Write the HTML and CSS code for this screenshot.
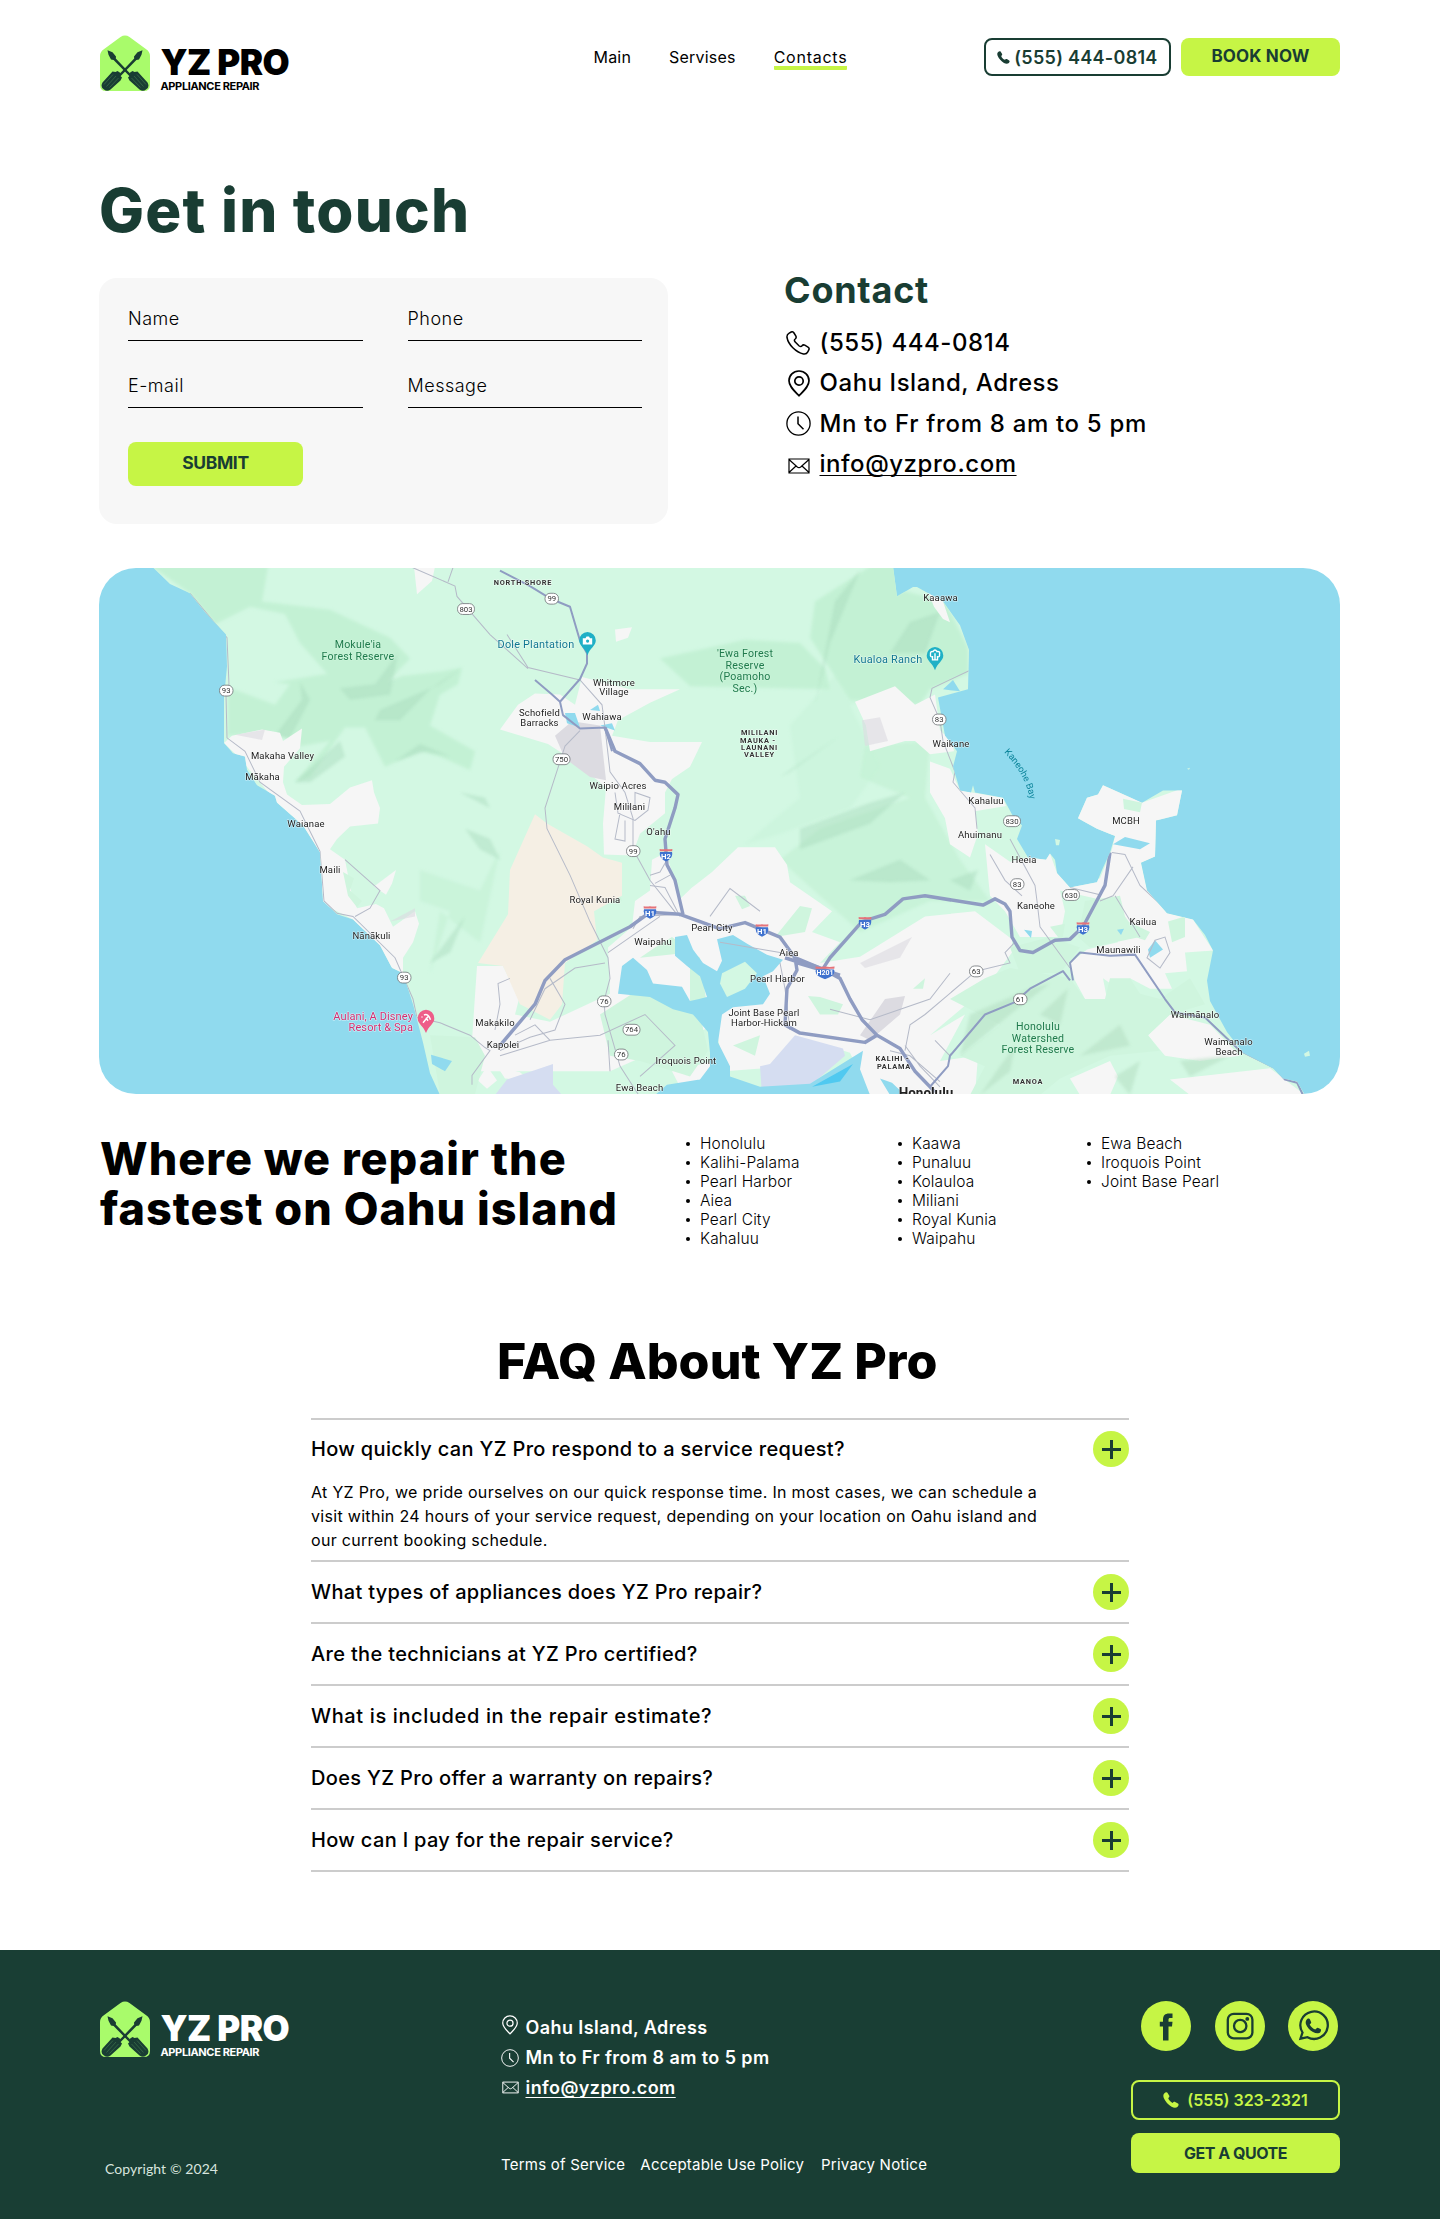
FILE: index.html
```html
<!DOCTYPE html>
<html lang="en">
<head>
<meta charset="utf-8">
<title>YZ Pro – Contacts</title>
<link rel="stylesheet" href="styles.css">
</head>
<body>
<svg class="defs" width="0" height="0" aria-hidden="true">
  <symbol id="mark" viewBox="0 0 50 56">
    <path d="M20.500 1.900Q25 -1 29.500 1.900L46.500 14.500Q50 17 50 21V50Q50 56 44 56H6Q0 56 0 50V21Q0 17 3.500 14.500Z" fill="#a9fb6b"/>
    <g id="driver">
      <path d="M7.500 15.200L12.500 17.300L16 21.500L15.800 23.500L32 40.500L30.300 42L13.600 25L11 24.500L8.500 19.800Z" fill="#193d33"/>
      <path d="M28 42.500L30.500 40L29.500 38L32.500 36L34.500 37L37.500 36.500L47.500 47.500Q50 52 46 54.500Q43 57 39.500 54.500L29.500 45.500Z" fill="#193d33"/>
      <path d="M34 41L43.500 51.500M37 39.500L46 49.500M31.500 43L40.500 52.500" stroke="#4f8a57" stroke-width=".5"/>
    </g>
    <use href="#driver" transform="matrix(-1 0 0 1 50 0)"/>
  </symbol>
  <symbol id="handset" viewBox="0 0 16 16">
    <path d="M1.200 1.500C2.300.2 4 0 4.600.9L6.300 3.800C6.700 4.600 6 5.400 5.200 6.100C5.700 8 7.500 10 9.700 10.900C10.300 10.200 11.200 9.400 12.100 9.900L15 11.600C16 12.400 15.600 13.700 14.600 14.700C13.200 16 11 16.100 8.600 14.700C5.200 12.700 2.200 9.200.9 6.200C.1 4.300.1 2.700 1.200 1.500Z" fill="currentColor"/>
  </symbol>
  <symbol id="phone" viewBox="0 0 24 24">
    <path d="M3.200 2.100L5.200 1C6.300.5 7.400 1 8 2L9.900 5.200C10.500 6.400 10.100 7.300 9.200 8C8 8.800 8.200 9.600 9 10.800L13.200 15C14.400 15.800 15.200 16 16 14.800C16.700 13.900 17.700 13.600 18.800 14.200L22 16.100C23 16.700 23.400 17.800 22.800 18.900L21.800 20.800C21 22.400 19.500 23.200 17.500 22.900C9.800 21.200 2.300 13.600 1 6.500C.7 4.500 1.500 3 3.200 2.100Z" fill="none" stroke="currentColor" stroke-width="1.500"/>
  </symbol>
  <symbol id="pin" viewBox="0 0 22 27">
    <path d="M11 1C5.300 1 1 5.200 1 10.700C1 16.200 6 20.500 11 25.700C16 20.500 21 16.200 21 10.700C21 5.200 16.700 1 11 1Z" fill="none" stroke="currentColor" stroke-width="1.700"/>
    <circle cx="11" cy="11" r="4.200" fill="none" stroke="currentColor" stroke-width="1.700"/>
  </symbol>
  <symbol id="clock" viewBox="0 0 25 25">
    <circle cx="12.500" cy="12.500" r="11.600" fill="none" stroke="currentColor" stroke-width="1.300"/>
    <path d="M12 5.500V12.800L17.500 18.300" fill="none" stroke="currentColor" stroke-width="1.500"/>
  </symbol>
  <symbol id="mail" viewBox="0 0 22 16">
    <path d="M1 1H21V15H1ZM1 1.500L9.300 9Q11 10.300 12.700 9L21 1.500M1 14.500L8 8M21 14.500L14 8" fill="none" stroke="currentColor" stroke-width="1.200"/>
  </symbol>
  <symbol id="shield" viewBox="0 0 14 13">
    <path d="M1 3.500H13Q14.500 9.500 7 12.800Q-.5 9.500 1 3.500Z" fill="#3f72cf"/>
    <path d="M.6.600Q3.800 1.200 7 .6Q10.200 1.200 13.400.6L13.200 2.800H.8Z" fill="#e5737a"/>
  </symbol>
</svg>

<header class="header">
  <a class="brand">
    <svg class="brand-mark"><use href="#mark"/></svg>
    <span class="brand-text"><b class="brand-name">YZ PRO</b><b class="brand-sub">APPLIANCE REPAIR</b></span>
  </a>
  <nav class="nav"><a>Main</a><a>Servises</a><a class="active">Contacts</a></nav>
  <div class="header-actions">
    <a class="btn btn-outline"><svg class="ic-btn"><use href="#handset"/></svg>(555) 444-0814</a>
    <a class="btn btn-solid btn-book">BOOK NOW</a>
  </div>
</header>

<main class="main">
  <h1 class="title">Get in touch</h1>
  <section class="touch">
    <form class="form">
      <input class="field" placeholder="Name">
      <input class="field" placeholder="Phone">
      <input class="field" placeholder="E-mail">
      <input class="field" placeholder="Message">
      <button class="submit" type="button">SUBMIT</button>
    </form>
    <div class="contact">
      <h2>Contact</h2>
      <ul>
        <li><svg class="i-phone"><use href="#phone"/></svg><span>(555) 444-0814</span></li>
        <li><svg class="i-pin"><use href="#pin"/></svg><span>Oahu Island, Adress</span></li>
        <li><svg class="i-clock"><use href="#clock"/></svg><span class="hours">Mn to Fr from 8 am to 5 pm</span></li>
        <li><svg class="i-mail"><use href="#mail"/></svg><span class="link">info@yzpro.com</span></li>
      </ul>
    </div>
  </section>

  <svg class="map" viewBox="99 567.500 1241 509.500" preserveAspectRatio="none">
    <defs><filter id="soft" x="-10%" y="-10%" width="120%" height="120%"><feGaussianBlur stdDeviation="1.600"/></filter>
    <clipPath id="landclip"><use href="#landshape"/></clipPath></defs>
    <rect x="99" y="567" width="1242" height="511" fill="#90daee"/>
    <path id="landshape" fill="#d3f8e3" d="M152 566L170 583L190 592L205 610L226 632L227 663L224 693L224 737L233 747L245 750L247 763L257 778L275 788L277 795L303 817L320 843L323 890L337 903L353 908L380 933L392 955L403 960L413 990L423 1027L430 1057L440 1078H1305L1297 1065L1283 1062L1273 1052L1243 1037L1227 1017L1210 987L1207 967L1213 938L1205 923L1193 908L1167 902L1147 880L1141 853L1155 847L1156 812L1177 807L1182 783L1163 783L1142 795L1103 778L1098 787L1087 790L1078 810L1097 820L1115 827L1110 843L1102 860L1097 872L1070 877L1057 863L1055 850L1050 844L1046 850L1028 848L1017 830L1022 817L1013 808L1003 790L975 785L973 778L971 785L960 783L953 760L957 745L945 730L938 693L968 685L969 647L960 623L943 600L917 586L913 586L897 595L893 566Z"/>
    <g clip-path="url(#landclip)">
      <g fill="#c3f1d4" filter="url(#soft)">
        <path d="M152 566L268 566L262 600L330 608L390 635L410 655L385 680L340 684L300 640L285 612L250 605L215 622L190 592Z"/>
        <path d="M228 683L275 700L290 680L275 678L340 668L380 680L402 672L440 668L462 664L458 680L440 690L430 720L475 745L470 763L440 750L420 745L385 760L365 722L345 722L310 770L295 775L330 735L300 740L275 727L228 730Z"/>
        <path d="M660 655L745 637L800 640L825 665L830 685L690 682Z"/>
        <path d="M870 566L895 566L905 590L945 600L968 645L968 670L930 685L920 700L850 695L810 635L815 600Z"/>
        <path d="M790 720L855 650L840 610L875 640L890 690L850 700L880 760L850 800L780 825L745 835L800 790Z" opacity=".35"/>
        <path d="M865 740L930 735L925 790L960 850L990 890L930 890L860 920L780 850L820 820L910 790L860 770Z" opacity=".7"/>
        <path d="M420 860L480 880L500 840L480 930L440 900L430 960L450 900L420 890Z" opacity=".55"/>
      </g>
      <g fill="#a6d8ba" opacity=".42" filter="url(#soft)">
        <path d="M300 678L302 695L275 730L290 732L310 695ZM340 684L375 680L398 650L390 690L350 695ZM380 705L440 680L462 664L430 685L400 715L375 715ZM295 775L340 735L345 750L310 775ZM395 755L420 738L450 750L425 745ZM465 820L490 830L500 850L480 840ZM460 785L490 800L485 790ZM465 905L430 950L450 940ZM835 600L860 570L830 640L815 700ZM910 620L940 610L925 650L890 650ZM800 820L870 795L905 785L870 815L800 840ZM850 870L900 850L930 870L890 872ZM950 870L978 860L970 880ZM780 770L840 730L790 765Z"/>
      </g>
      <g fill="#f6f6f6">
        <path d="M224 737L232 730L262 724L280 727L283 735L302 723L300 742L284 760L283 775L287 787L302 797L330 796L350 780L372 773L374 785L380 800L378 815L350 818L337 830L330 840L345 850L352 885L357 897L376 893L384 897L393 915L415 900L419 912L413 930L403 945L403 960L392 955L353 908L323 893L320 843L303 817L277 795L240 752Z"/>
        <path d="M414 566L435 566L432 580L417 593ZM615 627L632 625L628 635L616 639Z"/>
        <path d="M500 724L518 700L535 689L560 690L575 700L582 673L630 685L680 685L650 698L618 715L612 730L650 736L702 736L690 760L672 772L665 785L665 805L640 825L632 846L604 845L603 815L606 780L575 755L548 738Z"/>
        <path d="M477 953L503 953L519 985L515 1000L550 1007L610 980L608 935L632 915L635 890L650 880L652 850L666 843L680 888L692 877L712 862L738 838L775 838L787 855L790 872L832 900L812 920L840 930L820 950L860 944L925 905L975 900L1012 927L1012 940L985 975L930 1020L965 1000L940 1045L978 1040L975 1078L870 1078L850 1037L800 1022L790 1050L725 1055L715 1010L610 1055L480 1055L472 1025Z"/>
        <path d="M855 697L895 682L915 700L935 690L940 725L952 735L954 745L930 748L915 735L905 735L870 745L866 720ZM930 755L950 762L960 783L1003 790L1006 798L975 803L978 825L970 848L950 835L945 810L930 785Z"/>
        <path d="M985 835L1010 852L1028 848L1050 844L1057 863L1070 877L1100 868L1112 840L1115 827L1070 815L1080 785L1103 775L1142 795L1185 780L1177 810L1156 812L1156 847L1141 853L1147 880L1167 902L1193 908L1213 938L1185 940L1187 958L1165 960L1172 975L1150 975L1130 965L1122 978L1103 965L1107 985L1085 985L1075 967L1070 950L1087 937L1118 930L1098 888L1060 880L1065 900L1060 925L1020 925L1005 900L990 885Z"/>
        <path d="M928 590L943 600L950 620L943 617L934 605ZM1148 1020L1170 1000L1210 1010L1240 1040L1200 1045L1165 1040ZM1170 1063L1270 1052L1305 1078H1190ZM1070 1062L1110 1045L1118 1060L1110 1078H1080Z"/>
        <path d="M497 1050L520 1056L530 1064L505 1062ZM672 1055L715 1045L705 1064L680 1070ZM487 1050L497 1064L487 1072L478 1064Z"/>
      </g>
      <g fill="#cff5de">
        <path d="M343 862L354 868L350 880L362 890L357 896L348 885ZM1123 791L1142 795L1140 804L1124 801ZM1010 935L1050 925L1080 935L1060 960L1020 960ZM1050 915L1065 912L1062 930ZM985 965L1010 955L1070 965L1085 985L1105 985L1110 965L1130 965L1140 980L1160 985L1190 965L1205 990L1170 1000L1148 1020L1160 1035L1110 1040L1060 1062L1040 1078L970 1078L985 1050L960 1040L1000 1010L950 985ZM1085 890L1120 885L1125 905L1140 925L1090 935L1078 925ZM1100 900L1128 910L1150 920L1145 928L1120 920ZM1168 910L1185 905L1185 925L1172 930Z"/>
        <path d="M775 925L800 895L812 897L805 920ZM808 982L820 983L843 990L838 1000L820 1000ZM690 1000L690 940L640 945L655 935L672 925L700 945L706 985ZM600 1000L640 975L700 1000L708 1035L690 1060L640 1045L610 1040ZM430 1020L475 1022L485 1040L475 1077L440 1077ZM913 975L925 965L923 975ZM733 1030L760 1020L755 1040ZM605 880L618 878L622 890ZM735 885L745 885L750 895L742 898Z"/>
      </g>
      <path d="M374 876L396 860L392 873L386 884Z" fill="#f6f6f6"/>
      <g fill="#b5dfc3" opacity=".55" filter="url(#soft)"><path d="M970 1000L1030 975L1050 970L1010 1000L960 1040ZM1040 1000L1068 975L1060 1010ZM980 1078L1000 1050L1015 1030L1010 1055ZM1080 1040L1120 1010L1130 1030ZM1115 1060L1140 1045L1130 1078ZM1180 1045L1230 1040L1190 1060Z"/></g>
      <path fill="#f5efe4" d="M535 806L547 815L587 837L603 848L622 853L622 885L594 900L597 928L565 950L562 990L550 1005L520 990L503 953L478 950L508 903L510 860Z"/>
      <g fill="#dcdbe1"><path d="M555 730L572 716L600 720L606 773L590 770L565 752ZM860 1020L885 985L905 982L900 1000L870 1025Z"/><path opacity=".6" d="M862 715L880 712L888 735L865 740ZM860 950L912 925L900 945L865 955ZM390 910L415 897L415 905ZM235 729L265 724L262 734Z"/></g>
      <path fill="#d5ddf1" d="M760 1050L770 1048L795 1020L843 1033L845 1040L815 1065L812 1078H762ZM495 1078L507 1063L553 1048L553 1068L562 1078Z"/>
      <g fill="#90daee">
        <path d="M675 925L687 923L693 937L703 950L717 958L722 948L717 927L733 923L748 932L767 942L783 947L773 958L763 963L770 980L763 990L733 993L722 1000L718 1027L730 1050L730 1060L760 1070L810 1067L863 1035L860 1053L870 1078H655L667 1068L700 1063L710 1050L710 1037L708 1017L693 1000L673 995L650 983L618 980L622 953L633 945L647 957L653 970L682 973L690 987L707 983L700 963L687 953L675 943Z"/>
        <path d="M943 685L953 676L960 687ZM565 708L575 708L580 722L567 718ZM590 705L598 700L600 706ZM600 720L612 718L615 725ZM431 1039L452 1045L445 1055L432 1048ZM1113 835L1125 828L1150 834L1140 840ZM1148 937L1155 928L1163 937L1150 945ZM1024 918L1032 919L1031 926ZM1117 918L1124 917L1121 923ZM880 1062L892 1066L905 1078H890Z"/>
      </g>
      <path fill="#d3f8e3" d="M720 970L722 960L745 949L757 960L745 975L727 983Z"/>
      <path fill="#50c9f0" d="M812 1070L853 1048L840 1065Z"/>
      <g class="minor">
        <path d="M190 592L227 635L229 680L226 690L227 732L245 745L260 775L300 803L320 842L324 890L337 902L353 905L395 945L413 985L417 1003L440 1008L470 1020L485 1032L490 1035L472 1059V1068"/>
        <path d="M410 566L455 585L457 595L490 632L528 665M448 581L453 567M507 632L528 664L580 676L602 700L605 722L610 765L625 785L633 810L633 840L650 870L677 903"/>
        <path d="M580 725L565 740L560 755L545 800L547 820L570 865L590 910L608 945L610 965L604 987L605 1000L620 1050L640 1080"/>
        <path d="M969 667L932 684L930 693L940 715L943 735L955 765L953 775L975 800L977 820M990 845L1005 870L1022 885M1010 830L1035 875L1037 890L1040 915L1070 955M1112 843L1125 845L1140 875L1170 902M1133 857L1113 885L1100 890M1070 877L1100 884M1115 885L1140 925"/>
        <path d="M633 917L640 905L675 903M608 940L660 905M650 865L660 862L667 850M655 873L670 865M650 875L665 877L680 905M500 1040L550 1025L600 1020L645 1000L675 1030L640 1060M610 1055L608 1025M550 1025L535 1010L515 1020M550 965L565 990L555 1015L530 1022L500 1035M605 950L575 955L545 975L530 1005M345 850L380 880L370 897L355 905M710 905L730 878L760 900M780 950L785 975L790 1015M1015 930L1005 940L1010 950L976 958L925 1000L910 1010L905 1035M830 995L870 1005L930 985L950 960M495 1015L500 990L498 970L510 965"/>
        <path d="M615 785L618 805L635 812L648 802L650 790L635 785L635 800M625 812L625 832L615 830L620 805M720 930L780 940L830 957M905 1030L920 1050L940 1070M890 1035L910 1040L940 1065M950 1040L935 1025M1155 928L1165 925L1170 940L1160 955L1147 945Z"/>
      </g>
      <g class="major">
        <path d="M535 676L552 690L560 697M1070 967L1063 958L1030 975L1015 988L985 1000L950 1040L948 1050L930 1070M1073 967L1070 950L1080 940L1110 943L1135 942L1165 985L1175 998L1205 1003L1240 1035L1275 1052L1285 1063L1297 1066L1303 1078"/>
        <path d="M500 570L530 585L550 597L570 605L580 638L587 650L587 660L580 675L560 697L563 710L580 723L605 722L612 745"/>
      </g>
      <g class="highway">
        <path d="M500 1030L535 990L545 967L565 947L630 915L650 901L680 903L720 917L745 911L780 925L795 945L825 957L840 965L850 985L862 1005L877 1020L900 1033L915 1055L935 1075M683 903L675 870L667 855L665 830L675 800L678 787L665 775L655 773L640 757L615 745L605 722"/>
        <path d="M822 957L830 945L862 910L885 903L903 888L925 885L983 894L995 888L1005 893L1010 900L1012 925L1020 938L1033 940L1055 928L1070 927L1083 915L1105 875L1110 843"/>
        <path d="M795 945L797 957L787 975L785 1010L800 1018L865 1027L877 1020M785 945L840 962M797 950L825 958"/>
      </g>
    </g>
    <path fill="#d3f8e3" d="M1055 830L1060 831L1059 836L1056 836ZM1187 762L1190 761L1189 763ZM1304 1038L1309 1035L1310 1040L1305 1041Z"/>

    <g class="route"><g><rect x="457.500" y="602" width="17" height="10.500" rx="5"/><rect x="545" y="592" width="13.500" height="10.500" rx="5"/><rect x="219.500" y="681" width="13.500" height="10.500" rx="5"/><rect x="397.500" y="959" width="13.500" height="10.500" rx="5"/><rect x="553" y="747.500" width="17" height="10.500" rx="5"/><rect x="626.500" y="836.500" width="13.500" height="10.500" rx="5"/><rect x="597.500" y="982" width="13.500" height="10.500" rx="5"/><rect x="623" y="1009.500" width="17" height="10.500" rx="5"/><rect x="614.500" y="1033.500" width="13.500" height="10.500" rx="5"/><rect x="932.500" y="709" width="13.500" height="10.500" rx="5"/><rect x="1003.500" y="807.500" width="17" height="10.500" rx="5"/><rect x="1010.500" y="868.500" width="13.500" height="10.500" rx="5"/><rect x="1062.500" y="879" width="17" height="10.500" rx="5"/><rect x="969.500" y="953" width="13.500" height="10.500" rx="5"/><rect x="1013.500" y="980" width="13.500" height="10.500" rx="5"/></g>
      <text x="466" y="609.700">803</text><text x="551.800" y="599.700">99</text><text x="226.200" y="688.700">93</text><text x="404.200" y="966.700">93</text><text x="561.500" y="755.200">750</text><text x="633.200" y="844.200">99</text><text x="604.200" y="989.700">76</text><text x="631.500" y="1017.200">764</text><text x="621.200" y="1041.200">76</text><text x="939.200" y="716.700">83</text><text x="1012" y="815.200">830</text><text x="1017.200" y="876.200">83</text><text x="1071" y="886.700">630</text><text x="976.200" y="960.700">63</text><text x="1020.200" y="987.700">61</text></g>
    <g class="inter"><use href="#shield" x="659" y="839" width="14" height="13"/><use href="#shield" x="643" y="894.500" width="14" height="13"/><use href="#shield" x="755" y="912" width="14" height="13"/><use href="#shield" x="858" y="905" width="14" height="13"/><use href="#shield" x="1076" y="910" width="14" height="13"/>
      <g transform="translate(814.500 953) scale(1.500 1)"><use href="#shield" width="14" height="13"/></g>
      <text x="666" y="849">H2</text><text x="650" y="904.500">H1</text><text x="762" y="922">H1</text><text x="865" y="915">H3</text><text x="1083" y="920">H3</text><text class="wide" x="825" y="962">H201</text></g>

    <g class="poi">
      <path class="drop-teal" d="M587.500 629.500A8.300 8.300 0 0 1 595.800 637.800C595.800 643 590 645 587.500 652C585 645 579.200 643 579.200 637.800A8.300 8.300 0 0 1 587.500 629.500Z"/>
      <path class="drop-teal" d="M935 644A8.300 8.300 0 0 1 943.300 652.300C943.300 657.500 937.500 659.500 935 666.500C932.500 659.500 926.700 657.500 926.700 652.300A8.300 8.300 0 0 1 935 644Z"/>
      <path class="drop-pink" d="M426 995.500A8.300 8.300 0 0 1 434.300 1003.800C434.300 1009 428.500 1011 426 1018C423.500 1011 417.700 1009 417.700 1003.800A8.300 8.300 0 0 1 426 995.500Z"/>
      <path d="M582.800 635.500H585.500L586.500 633.800H589L590 635.500H592.200V641.500H582.800Z" fill="#fff"/><circle cx="587.600" cy="638.300" r="1.600" fill="#1fb0c6"/>
      <path d="M930.500 651Q930 648 933 648.500Q935 645.500 937 648.500Q940.500 648 939.500 651Q940 654 937.500 653.500V656.500H932.500V653.500Q930 654 930.500 651ZM935 650V656" fill="none" stroke="#fff" stroke-width="1.400"/>
      <path d="M423 1008L429 1001M424 1000.500Q428 998.500 430.500 1005M421.500 1002.500H422.500M426 1003L428 1006" fill="none" stroke="#fff" stroke-width="1.500"/>
    </g>

    <g class="lbl green"><text x="358" y="645">Mokule'ia</text><text x="358" y="656.300">Forest Reserve</text><text x="745" y="654">'Ewa Forest</text><text x="745" y="665.200">Reserve</text><text x="745" y="676.300">(Poamoho</text><text x="745" y="687.500">Sec.)</text><text x="1038" y="1015.500">Honolulu</text><text x="1038" y="1026.500">Watershed</text><text x="1038" y="1037.500">Forest Reserve</text></g>
    <g class="lbl teal"><text x="536" y="645">Dole Plantation</text><text x="888" y="660">Kualoa Ranch</text></g>
    <g class="lbl pink"><text x="413" y="1005.500">Aulani, A Disney</text><text x="413" y="1016">Resort &amp; Spa</text></g>
    <g class="lbl town"><text x="940.500" y="599.500">Kaaawa</text><text x="614" y="681.500">Whitmore</text><text x="614" y="690.500">Village</text><text x="539.500" y="711">Schofield</text><text x="539.500" y="720.500">Barracks</text><text x="602" y="714.500">Wahiawa</text><text x="951" y="741">Waikane</text><text x="618" y="782">Waipio Acres</text><text x="629.500" y="802">Mililani</text><text x="658.500" y="826.500">O'ahu</text><text x="282.500" y="753">Makaha Valley</text><text x="262.500" y="772.500">Mākaha</text><text x="306" y="818.500">Waianae</text><text x="330" y="862.500">Maili</text><text x="371.500" y="927">Nānākuli</text><text x="495" y="1011.500">Makakilo</text><text x="503" y="1032">Kapolei</text><text x="595" y="892">Royal Kunia</text><text x="653" y="933">Waipahu</text><text x="712" y="919.500">Pearl City</text><text x="789" y="943.500">Aiea</text><text x="777.500" y="969">Pearl Harbor</text><text x="764" y="1001.500">Joint Base Pearl</text><text x="764" y="1011">Harbor-Hickam</text><text x="686" y="1048">Iroquois Point</text><text x="639.500" y="1074.500">Ewa Beach</text><text x="986" y="796.500">Kahaluu</text><text x="980" y="829.500">Ahuimanu</text><text x="1024" y="853.500">Heeia</text><text x="1036" y="897.500">Kaneohe</text><text x="1143" y="913.500">Kailua</text><text x="1118.500" y="940.500">Maunawili</text><text x="1126" y="815.500">MCBH</text><text x="1195" y="1003">Waimānalo</text><text x="1228.500" y="1030">Waimanalo</text><text x="1229" y="1039.300">Beach</text></g>
    <g class="lbl area"><text x="523" y="584">NORTH SHORE</text><text x="759.500" y="729.500">MILILANI</text><text x="758" y="736.600">MAUKA -</text><text x="759.500" y="743.700">LAUNANI</text><text x="759.500" y="751">VALLEY</text><text x="892.500" y="1045.500">KALIHI -</text><text x="894" y="1052.500">PALAMA</text><text x="1028" y="1067.500">MANOA</text></g>
    <text class="lbl city" x="926" y="1081">Honolulu</text>
    <path id="bay" d="M1004 746Q1026 768 1030 792" fill="none"/>
    <text class="lbl bay"><textPath href="#bay">Kaneohe Bay</textPath></text>
  </svg>

  <section class="areas">
    <h2>Where we repair the<br>fastest on Oahu island</h2>
    <ul><li>Honolulu</li><li>Kalihi-Palama</li><li>Pearl Harbor</li><li>Aiea</li><li>Pearl City</li><li>Kahaluu</li></ul>
    <ul><li>Kaawa</li><li>Punaluu</li><li>Kolauloa</li><li>Miliani</li><li>Royal Kunia</li><li>Waipahu</li></ul>
    <ul><li>Ewa Beach</li><li>Iroquois Point</li><li>Joint Base Pearl</li></ul>
  </section>

  <section class="faq">
    <h2>FAQ About YZ Pro</h2>
    <div class="item open">
      <div class="question"><span>How quickly can YZ Pro respond to a service request?</span><i class="plus"></i></div>
      <p>At YZ Pro, we pride ourselves on our quick response time. In most cases, we can schedule a<br>visit within 24 hours of your service request, depending on your location on Oahu island and<br>our current booking schedule.</p>
    </div>
    <div class="item"><div class="question"><span>What types of appliances does YZ Pro repair?</span><i class="plus"></i></div></div>
    <div class="item"><div class="question"><span>Are the technicians at YZ Pro certified?</span><i class="plus"></i></div></div>
    <div class="item"><div class="question"><span class="loose">What is included in the repair estimate?</span><i class="plus"></i></div></div>
    <div class="item"><div class="question"><span>Does YZ Pro offer a warranty on repairs?</span><i class="plus"></i></div></div>
    <div class="item"><div class="question"><span>How can I pay for the repair service?</span><i class="plus"></i></div></div>
  </section>
</main>

<footer class="footer">
  <div class="f-left">
    <a class="brand">
      <svg class="brand-mark"><use href="#mark"/></svg>
      <span class="brand-text"><b class="brand-name">YZ PRO</b><b class="brand-sub">APPLIANCE REPAIR</b></span>
    </a>
    <span class="copy">Copyright © 2024</span>
  </div>
  <div class="f-mid">
    <ul class="f-contact">
      <li><svg class="f-pin"><use href="#pin"/></svg><span>Oahu Island, Adress</span></li>
      <li><svg class="f-clock"><use href="#clock"/></svg><span>Mn to Fr from 8 am to 5 pm</span></li>
      <li><svg class="f-mail"><use href="#mail"/></svg><span class="link">info@yzpro.com</span></li>
    </ul>
    <nav class="legal"><a>Terms of Service</a><a>Acceptable Use Policy</a><a>Privacy Notice</a></nav>
  </div>
  <div class="f-right">
    <div class="social">
      <svg viewBox="0 0 50 50"><circle cx="25" cy="25" r="25"/><path d="M22 39.500V25.500H18.800V20.800H22V18.500C22 14.500 24 12.500 28 12.500H31.500V17H29.300C28 17 27.500 17.500 27.500 18.800V20.800H31.500L31 25.500H27.500V39.500Z" fill="#193d33"/></svg>
      <svg viewBox="0 0 50 50"><circle cx="25" cy="25" r="25"/><g fill="none" stroke="#193d33" stroke-width="2.300"><rect x="12.800" y="12.800" width="24.600" height="24.600" rx="6"/><circle cx="25.200" cy="25" r="6.200"/></g><circle cx="32.300" cy="17.900" r="1.900" fill="#193d33"/></svg>
      <svg viewBox="0 0 50 50"><circle cx="25" cy="25" r="25"/><path d="M12.500 37.700L14.500 31.500A13.700 13.700 0 1 1 19.500 36.200Z" fill="none" stroke="#193d33" stroke-width="2.300"/><path d="M19.500 17.800C20.500 17.500 21.500 17.400 22 18.500L23.200 21.200C23.300 22.200 22.300 22.800 21.700 23.600C23 26 24.800 27.600 27.200 28.600C28.200 28.200 28.700 26.700 29.700 26.800L32.500 28.100C33.300 28.600 33.100 30 32.500 30.900C31 32.900 28 32.700 25 31.100C21.500 29.300 19 26.200 17.900 23C17.300 20.900 18 18.700 19.500 17.800Z" fill="#193d33"/></svg>
    </div>
    <a class="btn f-phone"><svg class="ic-btn"><use href="#handset"/></svg>(555) 323-2321</a>
    <a class="btn btn-solid f-quote">GET A QUOTE</a>
  </div>
</footer>
</body>
</html>
```
FILE: styles.css
```css
* { box-sizing: border-box; margin: 0; padding: 0; }
body { width: 1440px; background: #fff; color: #000; font-family: Inter, "Open Sans", sans-serif; }
ul { list-style: none; }
svg { display: block; flex: none; }
.defs { position: absolute; }
.link { text-decoration: underline; text-decoration-thickness: 1px; text-underline-offset: 3px; text-decoration-skip-ink: none; }

/* header */
.header { display: grid; grid-template-columns: 493.5px 390.5px 356px; padding: 35px 100px 0; height: 91px; }
.brand { display: flex; gap: 10.5px; height: 56px; }
.footer .brand { padding-left: 1px; }
.brand-mark { width: 50px; height: 56px; }
.brand-text { display: flex; flex-direction: column; gap: 5.5px; padding-top: 13.5px; white-space: nowrap; }
.brand-name { font-size: 35px; font-weight: 900; line-height: 26px; letter-spacing: -.55px; }
.brand-sub { font-size: 11px; font-weight: 700; line-height: 12px; letter-spacing: -.36px; }
.nav { display: flex; align-items: flex-start; gap: 38px; padding-top: 13px; font-size: 16px; line-height: 18px; }
.nav a { letter-spacing: .2px; }
.nav .active { letter-spacing: .75px; border-bottom: 4px solid #c6f545; border-radius: 1px; }
.header-actions { display: flex; gap: 10px; margin-top: 3px; }
.btn { display: flex; align-items: center; justify-content: center; border-radius: 8px; white-space: nowrap; }
.btn-outline { width: 187px; height: 38px; border: 2px solid #193d33; color: #193d33; font-size: 18px; font-weight: 600; letter-spacing: .29px; gap: 4px; }
.btn-outline .ic-btn { width: 13px; height: 13px; }
.btn-solid { background: #c6f545; color: #193d33; font-weight: 700; }
.btn-book { width: 159px; height: 38px; padding-bottom: 2px; font-size: 17px; letter-spacing: .15px; }

/* contact form */
.main { padding: 89px 100px 0 99px; }
.title { color: #193d33; font-size: 60px; font-weight: 800; line-height: 60px; letter-spacing: 1.2px; }
.touch { display: grid; grid-template-columns: 569px 1fr; gap: 116px; margin-top: 38px; }
.form { display: grid; grid-template-columns: 234.5px 234.5px; gap: 29px 45px; align-content: start; height: 246px; padding: 25px 29px; background: #f7f7f7; border-radius: 18px; }
.field { height: 38px; padding: 0 0 6px; border: 0; border-bottom: 1px solid #000; background: none; font: 300 18px/30px Inter, sans-serif; letter-spacing: .5px; }
.field::placeholder { color: #000; opacity: 1; }
.submit { width: 175px; height: 44px; margin-top: 5px; padding-bottom: 3px; border: 0; border-radius: 8px; background: #c6f545; color: #193d33; font: 700 17.500px Inter, sans-serif; letter-spacing: -.4px; }
.contact { margin-top: -8px; }
.contact h2 { color: #193d33; font-size: 36px; line-height: 40px; letter-spacing: .75px; }
.contact ul { margin-top: 13px; }
.contact li { display: grid; grid-template-columns: 35.5px auto; align-items: center; justify-content: start; height: 40.3px; font-size: 24px; line-height: 40px; font-weight: 500; letter-spacing: .55px; }
.contact .hours { letter-spacing: .67px; }
.i-phone { width: 24px; height: 24px; margin-left: 2px; }
.i-pin { width: 22px; height: 27px; margin-left: 4px; }
.i-clock { width: 25px; height: 25px; margin-left: 2px; }
.i-mail { width: 22px; height: 16px; margin-left: 4px; margin-top: 3px; }

/* map */
.map { width: 1241px; height: 526px; margin-top: 44px; border-radius: 37px; overflow: hidden; }
.minor { fill: none; stroke: #b5bac8; stroke-width: 1; }
.major { fill: none; stroke: #8f9cc2; stroke-width: 2; stroke-linejoin: round; }
.highway { fill: none; stroke: #8f9cc2; stroke-width: 3.4; stroke-linejoin: round; }
.drop-teal { fill: #1fb0c6; }
.drop-pink { fill: #ee5d88; }
.map text { font-family: Roboto, sans-serif; text-anchor: middle; }
.route rect { fill: #fff; stroke: #6f7478; stroke-width: .8; }
.route text { font-size: 7.800px; fill: #333; }
.inter text { font-size: 7.800px; font-weight: 700; fill: #fff; }
.inter .wide { font-size: 7px; }
.lbl { paint-order: stroke; stroke: rgba(255,255,255,.6); stroke-width: 1.2px; stroke-linejoin: round; }
.green { font-size: 10.600px; letter-spacing: .2px; fill: #1f7a4c; stroke: rgba(220,250,230,.4); }
.teal { font-size: 10.900px; letter-spacing: .2px; fill: #0f7690; }
.pink { font-size: 11px; letter-spacing: .12px; fill: #d42f70; }
.pink text { text-anchor: end; }
.town { font-size: 9.500px; letter-spacing: .15px; fill: #222; }
.area { font-size: 7.400px; font-weight: 700; letter-spacing: .75px; fill: #333; }
.city { font-size: 13.500px; font-weight: 700; fill: #222; }
.map .bay { font-size: 9.200px; fill: #0f869c; stroke: none; }
.map .bay textPath { text-anchor: start; }

/* service areas */
.areas { display: grid; grid-template-columns: 587px 212px 189px 1fr; margin-top: 40px; }
.areas h2 { margin-left: 1px; font-size: 45px; font-weight: 800; line-height: 50px; letter-spacing: 1px; white-space: nowrap; }
.areas li { display: flex; align-items: center; gap: 10px; font-size: 15.500px; line-height: 19px; font-weight: 300; letter-spacing: .12px; }
.areas li::before { content: ""; width: 4px; height: 4px; border-radius: 50%; background: #000; }

/* faq */
.faq { width: 818px; margin: 83px 0 0 212px; }
.faq h2 { margin-bottom: 27px; padding-left: 186px; font-size: 50px; font-weight: 800; line-height: 60px; letter-spacing: .05px; white-space: nowrap; }
.item { border-top: 2px solid #ccc; }
.item:last-child { border-bottom: 2px solid #ccc; }
.question { display: flex; align-items: center; justify-content: space-between; height: 60px; font-size: 20px; font-weight: 500; letter-spacing: .33px; }
.question .loose { letter-spacing: .63px; }
.open .question { height: 58px; }
.open p { padding: 1.5px 0 8.5px; font-size: 16px; line-height: 24px; letter-spacing: .31px; white-space: nowrap; }
.plus { width: 36px; height: 36px; border-radius: 50%; background: linear-gradient(#193d33, #193d33) center / 19px 3px no-repeat, linear-gradient(#193d33, #193d33) center / 3px 19px no-repeat, #c6f545; }

/* footer */
.footer { display: grid; grid-template-columns: 402px 630px 209px; height: 269px; margin-top: 78px; padding: 51px 100px 40px 99px; background: #193e34; color: #fff; }
.f-left, .f-mid { display: flex; flex-direction: column; justify-content: space-between; }
.copy { margin-left: 6px; font: 400 14px/20px Lato, sans-serif; color: #d8e5df; letter-spacing: .08px; }
.f-contact { padding-top: 11.5px; font-size: 18px; font-weight: 600; line-height: 30px; letter-spacing: .42px; }
.f-contact li { display: grid; grid-template-columns: 24.5px auto; align-items: center; justify-content: start; height: 30px; }
.f-pin { width: 16px; height: 20px; margin: -5px 0 0 1px; }
.f-clock { width: 18px; height: 18px; }
.f-mail { width: 17px; height: 13px; margin-left: 1px; }
.legal { display: flex; gap: 15px; margin-bottom: 4.5px; font-size: 15px; line-height: 20px; letter-spacing: .22px; }
.legal a:last-child { margin-left: 2px; }
.social { display: flex; gap: 23.5px; margin-left: 10px; }
.social svg { width: 50px; height: 50px; fill: #c6f545; }
.f-phone { width: 209px; height: 40px; margin-top: 29px; border: 2px solid #c6f545; color: #c6f545; font-size: 16px; font-weight: 600; gap: 8px; }
.f-phone .ic-btn { width: 16px; height: 16px; }
.f-quote { width: 209px; height: 40px; margin-top: 13px; font-size: 16px; letter-spacing: -.5px; }
```
